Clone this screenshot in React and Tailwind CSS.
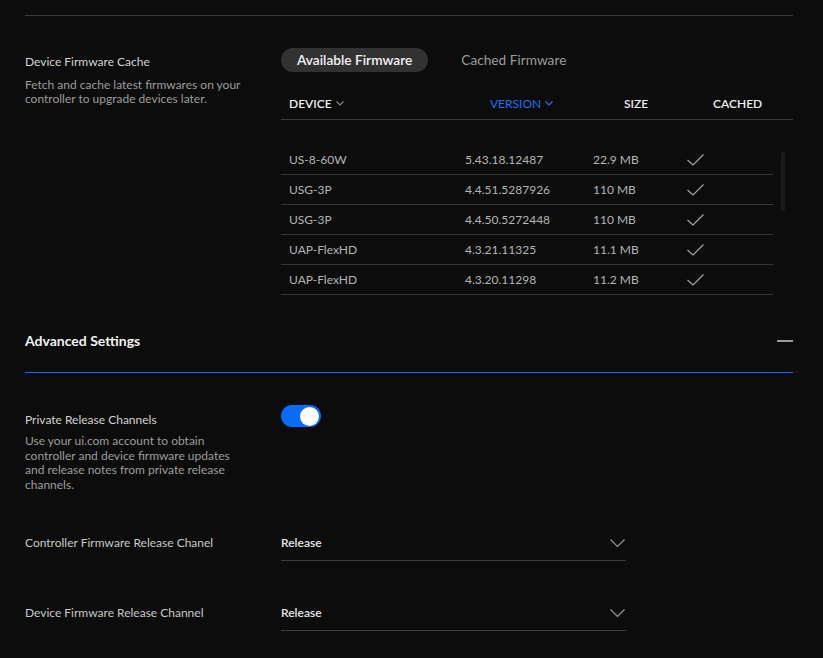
import React from "react";

const rows = [
  ["US-8-60W", "5.43.18.12487", "22.9 MB"],
  ["USG-3P", "4.4.51.5287926", "110 MB"],
  ["USG-3P", "4.4.50.5272448", "110 MB"],
  ["UAP-FlexHD", "4.3.21.11325", "11.1 MB"],
  ["UAP-FlexHD", "4.3.20.11298", "11.2 MB"],
];

function Check() {
  return (
    <svg width="17" height="12" viewBox="0 0 17 12" fill="none">
      <polyline points="0.5,6 6,11 16.5,0.5" stroke="#a8a8a8" strokeWidth="1.1" />
    </svg>
  );
}

function SmallChevron({ color }) {
  return (
    <svg width="8" height="5" viewBox="0 0 8 5" fill="none" className="ml-[4px]">
      <polyline points="0.5,0.5 4,4 7.5,0.5" stroke={color} strokeWidth="1.2" />
    </svg>
  );
}

function SelectChevron() {
  return (
    <svg width="15" height="9" viewBox="0 0 15 9" fill="none">
      <polyline points="0.5,0.5 7.5,7.5 14.5,0.5" stroke="#9a9a9a" strokeWidth="1.1" />
    </svg>
  );
}

function SelectRow({ label, first }) {
  return (
    <div className={first ? "flex mt-[34px]" : "flex mt-[35px]"}>
      <div className="w-[256px] pt-[9px] text-[12px] leading-[16px] text-[#c8c8c8]">{label}</div>
      <div className="w-[345px] h-[35px] flex items-center justify-between border-b border-[#3c3c3c] pr-[1px]">
        <span className="text-[12px] font-semibold text-[#e8e8e8]">Release</span>
        <SelectChevron />
      </div>
    </div>
  );
}

export default function App() {
  return (
    <div
      className="w-[823px] h-[658px] bg-[#0c0c0c] overflow-hidden"
      style={{ fontFamily: "Lato, 'Open Sans', sans-serif" }}
    >
      <div className="px-[25px] pt-[15px] w-[818px]">
        <div className="h-px bg-[#3a3a3a]" />

        {/* Device Firmware Cache */}
        <div className="flex pt-[32px]">
          <div className="w-[256px] pt-[6px]">
            <div className="text-[12px] leading-[16px] text-[#d2d2d2]">Device Firmware Cache</div>
            <div className="mt-[8px] w-[218px] text-[12px] leading-[14px] text-[#9c9c9c]">
              Fetch and cache latest firmwares on your controller to upgrade devices later.
            </div>
          </div>
          <div className="flex-1">
            <div className="flex items-center">
              <div className="h-[24px] px-[16px] rounded-full bg-[#323232] flex items-center text-[13.7px] font-semibold text-[#f2f2f2]">
                Available Firmware
              </div>
              <div className="ml-[33px] text-[13.7px] text-[#9a9a9a]">Cached Firmware</div>
            </div>
            <div className="mt-[16px] h-[32px] grid grid-cols-[209px_134px_89px_1fr] items-center border-b border-[#3a3a3a] text-[12px] font-semibold text-[#eeeeee]">
              <div className="pl-[8px] flex items-center">DEVICE<SmallChevron color="#8a8a8a" /></div>
              <div className="flex items-center text-[#1d73f0] font-normal">VERSION<SmallChevron color="#1d73f0" /></div>
              <div>SIZE</div>
              <div>CACHED</div>
            </div>
            <div className="flex pt-[25px]">
              <div className="w-[492px]">
                {rows.map((r, i) => (
                  <div
                    key={i}
                    className="h-[30px] grid grid-cols-[184px_128px_94px_1fr] items-center border-b border-[#363636] text-[12px] text-[#b4b4b4] pt-[1px]"
                  >
                    <div className="pl-[8px]">{r[0]}</div>
                    <div>{r[1]}</div>
                    <div>{r[2]}</div>
                    <div className="flex"><Check /></div>
                  </div>
                ))}
              </div>
              <div className="ml-[8px] mt-[7px] w-[4px] h-[59px] rounded-full bg-[#1a1a1a]" />
            </div>
          </div>
        </div>

        {/* Advanced Settings */}
        <div className="h-[77px] pt-[38px] flex justify-between items-start">
          <div className="text-[14px] leading-[16px] font-bold text-[#f2f2f2]">Advanced Settings</div>
          <div className="mt-[7px] w-[16px] h-[2px] bg-[#9a9a9a]" />
        </div>
        <div className="h-px bg-[#0a6cf5]" />

        {/* Private Release Channels */}
        <div className="flex pt-[32px]">
          <div className="w-[256px] pt-[7px]">
            <div className="text-[12px] leading-[16px] text-[#d2d2d2]">Private Release Channels</div>
            <div className="mt-[6px] w-[220px] text-[12px] leading-[14.6px] text-[#9c9c9c]">
              Use your ui.com account to obtain controller and device firmware updates and release notes from private release channels.
            </div>
          </div>
          <div className="w-[40px] h-[22px] rounded-full bg-[#0a6cf5] flex items-center justify-end pr-[2px]">
            <div className="w-[19px] h-[19px] rounded-full bg-white" />
          </div>
        </div>

        <SelectRow label="Controller Firmware Release Chanel" first />
        <SelectRow label="Device Firmware Release Channel" />
      </div>
    </div>
  );
}
